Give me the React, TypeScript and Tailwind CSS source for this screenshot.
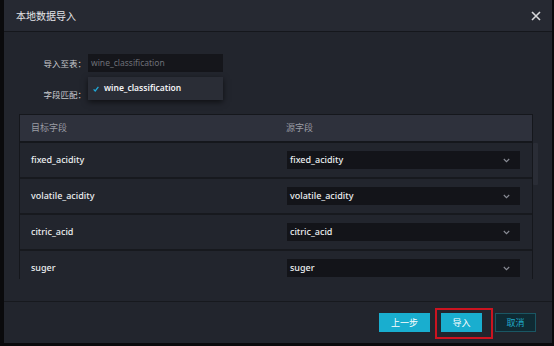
import React from "react";

const cjk = { fontFamily: '"Noto Sans CJK SC", "Noto Sans", sans-serif' };
const lat = { fontFamily: '"Noto Sans", "Noto Sans CJK SC", sans-serif' };

const rows = ["fixed_acidity", "volatile_acidity", "citric_acid", "suger"];

function Chevron() {
  return (
    <svg width="7" height="5" viewBox="0 0 7 5" fill="none">
      <path d="M0.8 1 L3.5 3.7 L6.2 1" stroke="#8a8d96" strokeWidth="1.1" />
    </svg>
  );
}

export default function App() {
  return (
    <div className="w-[554px] h-[346px] bg-[#0a0a0c] flex overflow-hidden">
      <div className="ml-[4px] w-[548px] h-[343px] bg-[#22252d] flex flex-col relative">
        {/* header */}
        <div className="h-[32px] shrink-0 bg-[#262932] border-b border-[#15171c] flex items-center justify-between pl-[12px] pr-[11px]">
          <span className="text-[10px] text-[#e4e5e8]" style={cjk}>本地数据导入</span>
          <svg width="10" height="10" viewBox="0 0 10 10">
            <path d="M1 1 L9 9 M9 1 L1 9" stroke="#d6d7da" strokeWidth="1.6" />
          </svg>
        </div>

        {/* form */}
        <div className="relative">
          <div className="flex items-center h-[18px] mt-[22px]">
            <div className="w-[82px] text-right text-[8.5px] text-[#c9cacd]" style={cjk}>导入至表：</div>
            <div className="ml-[2px] w-[135px] h-[18px] bg-[#15161b] flex items-center pl-[3px]">
              <span className="text-[8.5px] text-[#6e7078]" style={lat}>wine_classification</span>
            </div>
          </div>
          <div className="flex items-center h-[18px] mt-[13px]">
            <div className="w-[82px] text-right text-[8.5px] text-[#c9cacd]" style={cjk}>字段匹配：</div>
          </div>
          <div className="absolute left-[84px] top-[45px] w-[135px] h-[23px] bg-[#2a2d36] shadow-[0_2px_6px_rgba(0,0,0,0.6)] flex items-center pl-[5px] gap-[5px]">
            <svg width="6" height="6" viewBox="0 0 6 6">
              <path d="M0.6 3.4 L2.2 5 L5.4 0.8" stroke="#20a8d8" strokeWidth="1.3" fill="none" />
            </svg>
            <span className="text-[8.5px] font-semibold text-[#f2f2f4]" style={lat}>wine_classification</span>
          </div>
        </div>

        {/* table */}
        <div className="relative mt-[11px] ml-[15px] w-[514px] h-[165px] overflow-hidden border-l border-r border-t border-[#15171c]">
          <div className="h-[28px] bg-[#2e313c] border-b-2 border-[#15171c] flex items-center text-[9px] text-[#9a9ca4]" style={cjk}>
            <div className="w-[266px] pl-[11px]">目标字段</div>
            <div>源字段</div>
          </div>
          {rows.map((r) => (
            <div key={r} className="h-[36px] border-b-2 border-[#17191e] flex items-center">
              <div className="w-[266px] pl-[11px] text-[9px] font-medium text-[#eceef0]" style={lat}>{r}</div>
              <div className="ml-[1px] w-[233px] h-[18px] bg-[#131419] flex items-center justify-between pl-[3px] pr-[10px]">
                <span className="text-[9px] font-medium text-[#eceef0]" style={lat}>{r}</span>
                <Chevron />
              </div>
            </div>
          ))}
        </div>
        <div className="absolute left-[529px] top-[143px] w-[5px] h-[42px] bg-[#2a2d36] rounded-[1px]" />

        {/* footer */}
        <div className="mt-[22px] border-t border-[#17191e] flex-1 flex items-start justify-end pr-[16px] pt-[11px] relative">
          <div className="flex items-center">
            <div className="w-[51px] h-[19px] bg-[#19aecf] flex items-center justify-center text-[9px] text-white" style={cjk}>上一步</div>
            <div className="ml-[11px] w-[41px] h-[19px] bg-[#19aecf] flex items-center justify-center text-[9px] text-white" style={cjk}>导入</div>
            <div className="ml-[13px] w-[41px] h-[19px] bg-[#0f2a33] border border-[#1a5663] flex items-center justify-center text-[9px] text-[#1fa9c9]" style={cjk}>取消</div>
          </div>
          <div className="absolute left-[431px] top-[6px] w-[58px] h-[31px] border-2 border-[#cc1420]" />
        </div>
      </div>
    </div>
  );
}
